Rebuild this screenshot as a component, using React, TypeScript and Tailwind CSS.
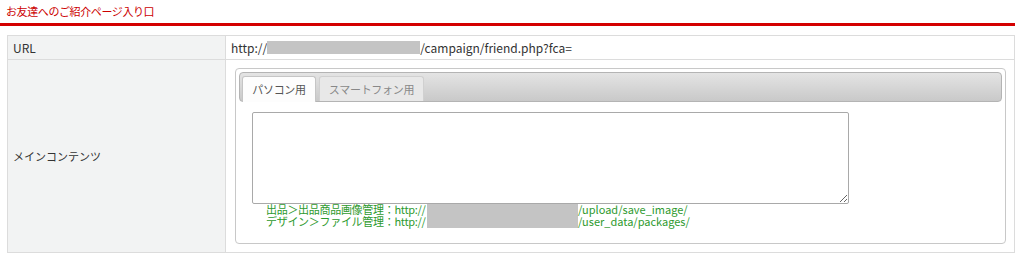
export default function App() {
  return (
    <div className="w-[1024px] h-[258px] bg-white overflow-hidden text-[#333]" style={{ fontFamily: '"Noto Sans CJK JP", "Noto Sans", sans-serif' }}>
      {/* Section title */}
      <h2 className="pl-[6px] pt-[4px] h-[23px] text-[11px] leading-[15px] tracking-[-0.4px] text-[#cc0000]">お友達へのご紹介ページ入り口</h2>
      <div className="h-[3px] w-[1015px] bg-[#d40000]" />

      {/* Form table */}
      <div className="ml-[7px] mt-[9px] w-[1008px] grid grid-cols-[218px_1fr] border border-[#dcdcdc] text-[12px]">
        <div className="h-[24px] flex items-center pl-[5px] bg-[#f2f3f3] border-r border-b border-[#dcdcdc]">URL</div>
        <div className="h-[24px] flex items-center pl-[5px] border-b border-[#dcdcdc]">
          <span>http://</span>
          <span className="inline-block w-[153px] h-[13px] bg-[#c4c4c4]" />
          <span>/campaign/friend.php?fca=</span>
        </div>

        <div className="flex items-center pl-[5px] bg-[#f2f3f3] border-r border-[#dcdcdc] text-[11px]">メインコンテンツ</div>
        <div className="pl-[9px] pr-[8px] pt-[8px] pb-[8px]">
          <div className="h-[176px] border border-[#c8c8c8] rounded-[4px] p-[3px] bg-white">
            {/* Tab bar */}
            <div className="h-[30px] flex items-end gap-[3px] pl-[2px] border border-[#b4b4b4] rounded-[4px] bg-gradient-to-b from-[#e4e4e4] to-[#c9c9c9] text-[11px] tracking-[-0.3px]">
              <div className="h-[26px] w-[74px] -mb-[1px] flex items-center justify-center rounded-t-[3px] border border-b-0 border-[#c5c5c5] bg-[#fdfdfd] text-[#555]">パソコン用</div>
              <div className="h-[25px] w-[105px] flex items-center justify-center rounded-t-[3px] border border-b-0 border-[#d0d0d0] bg-[#e8e8e8] text-[#888]">スマートフォン用</div>
            </div>
            {/* Panel body */}
            <div className="pl-[13px] pt-[10px]">
              <textarea className="block w-[597px] h-[92px] border border-[#a9a9a9] rounded-[2px] bg-white resize-y" />
              <div className="pl-[14px] text-[11px] leading-[11px] text-[#2e9a2e] flex flex-col gap-[1px]">
                <div className="flex items-center h-[11px]">
                  <span className="w-[161px] whitespace-nowrap tracking-[-0.3px]">出品＞出品商品画像管理：http://</span>
                  <span className="inline-block w-[151px] h-[12px] bg-[#c4c4c4]" />
                  <span>/upload/save_image/</span>
                </div>
                <div className="flex items-center h-[11px]">
                  <span className="w-[161px] whitespace-nowrap tracking-[-0.3px]">デザイン＞ファイル管理：http://</span>
                  <span className="inline-block w-[151px] h-[12px] bg-[#c4c4c4]" />
                  <span>/user_data/packages/</span>
                </div>
              </div>
            </div>
          </div>
        </div>
      </div>
    </div>
  );
}
